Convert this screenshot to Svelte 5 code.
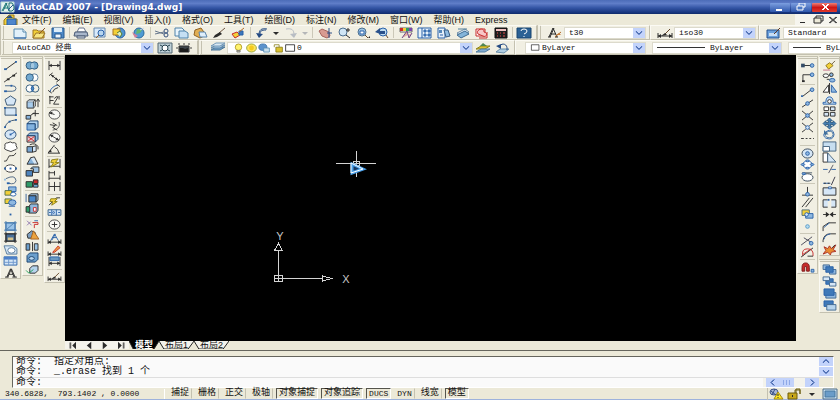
<!--
  Ventana principal de AutoCAD 2007: menús, barras de herramientas, área de
  dibujo, línea de comandos y barra de estado.
-->
<script lang="ts">
	type Shape = [d: string, fill?: string, stroke?: string];

	const K = '#2b2b2b';
	const B = '#2860a8';
	const L = '#8fb8e0';
	const P = '#d5e6f6';
	const Y = '#f2d038';
	const R = '#c82a2a';
	const G = '#2f9b68';
	const N = 'none';

	const o = (x: number, y: number, rx: number, ry = rx) =>
		`M${x - rx} ${y}a${rx} ${ry} 0 1 0 ${2 * rx} 0a${rx} ${ry} 0 1 0 ${-2 * rx} 0z`;
	const r = (x: number, y: number, w: number, h: number) => `M${x} ${y}h${w}v${h}h${-w}z`;

	// Cada icono se dibuja en una rejilla de 16x12: [trazado, relleno, línea]
	const icons: Record<string, Shape[]> = {
		app: [[r(1, 1, 13, 10), '#e7f4f0', '#b9d8d4'], ['M2 10l4-8 3 8M4 7h4', N, '#167a78'], ['M3 10l4-8M9 2h3l2 3v3l-2 2h-3z', N, '#1d6f74'], ['M8 9l5-5', N, '#24548a']],
		doc: [['M2 6l5-5h5v4h3v6h-13z', Y, '#9c7b16'], [r(5, 5, 9, 6), '#4d86cc', B], ['M4 4l4-3 3 3z', '#274f86']],
		new: [['M2 2h9l3 3v6h-12z', '#e2f1fa', '#5589ad'], ['M11 2v3h3', '#fff', '#5589ad'], ['M2 11h12', N, B]],
		open: [['M2 3h4l1 1h6v7h-11z', Y, '#9c7422'], ['M2 11l3-5h9l-3 5z', '#f7e682', '#9c7422'], ['M8 7l6-6', N, '#8b5a28']],
		save: [['M2 1h12v10h-12z', '#4e89c7', '#27598e'], [r(4, 1, 8, 4), '#dcecf8'], [r(5, 7, 6, 4), '#eef5fb', '#27598e']],
		print: [['M4 5l2-4h5l2 4z', '#fff', '#68748c'], ['M2 5h12l1 4h-14z', '#a9b7cb', '#4b5b75'], ['M4 9h8v2h-8z', '#dfe6ef', '#4b5b75']],
		preview: [['M2 1h11v9h-11z', '#d9eafa', '#6286ac'], [o(9, 6, 3), '#b8d6ef', B], ['M7 8l-3 3', N, '#976428']],
		publish: [[o(9, 6, 5), '#4f95cf', B], ['M2 2h7v6h-7z', Y, '#aa7520'], ['M6 6l3-2 2 3-2 3', '#dcecc0', '#557d2d']],
		globe: [[o(9, 6, 5), '#4f9bd3', '#2c6b9d'], ['M7 2l5 1-2 3-4 1z', '#64b46f'], ['M2 5l6 4-3 2z', '#cf7f9b'], ['M10 3l4-2', N, '#cfd8e8']],
		cut: [['M1 4l9 3M1 7l9-2', N, '#66768c'], [o(12, 4, 2), N, '#34507d'], [o(12, 8, 2), N, '#34507d']],
		copyclip: [['M2 1h7l2 2v6h-9z', '#e8f4fc', '#4f82a9'], ['M6 4h6l3 2v5h-9z', '#c5dff3', '#4f82a9']],
		paste: [['M3 3l6-2 5 7-6 3-6-3z', '#e0ae55', '#916425'], ['M7 5h6l2 5h-7z', '#dfeefa', '#5a85ad']],
		brush: [['M14 1l-6 5', N, '#6d5642'], ['M9 5l2 2-5 3-4 1 2-3z', K]],
		blockedit: [['M2 7l5-2 3 3-5 3z', Y, R], [r(9, 4, 4, 4), '#3b76bc', B], ['M9 5l5-4', N, '#b26c28']],
		undo: [['M13 2c-6-1-8 1-8 6', N, '#244a83'], ['M12 3c-5 0-6 1-6 5', N, '#244a83'], ['M2 6l7 1-4 4z', '#244a83']],
		redo: [['M3 2c6-1 8 1 8 6', N, '#b8bdc4'], ['M14 6l-7 1 4 4z', '#b8bdc4']],
		down: [['M5 5h6l-3 3z', K]],
		downgray: [['M5 5h6l-3 3z', '#b4b6b8']],
		pan: [['M2 4l3-2 7 3 1 4-3 2-5-2z', '#d89b91', '#a7655e'], ['M12 1v10M10 6h5', N, '#2e5186']],
		zoomrt: [[o(7, 5, 4), '#cfe5f5', '#4c6f90'], ['M10 8l4 3M12 1v4M10 3h4', N, K]],
		zoomwin: [[o(7, 5, 4), '#9ec5e5', '#4c6f90'], ['M5 4h4v3h-4z', '#fff', B], ['M10 8l3 3', N, '#684a2d'], ['M13 11l2-2v2z', K]],
		zoomprev: [[o(9, 5, 4), '#bddbf0', B], ['M1 5l5-4v3h5v3h-5z', '#28508b'], ['M12 8l2 3', N, '#684a2d']],
		props: [['M2 1h12v4h-12z', '#fff', '#666'], ['M2 1h3v3h-3z', R], ['M5 1h3v3h-3z', Y], ['M8 1h3v3h-3z', G], ['M11 1h3v3h-3z', '#7b45ae'], ['M4 11l5-7 2 7 3-5', '#e4aba0', '#704b8b']],
		dc: [[r(1, 1, 13, 10), '#e8f2fb', B], ['M5 1v10M7 3h2v2h-2zM11 3h2v2h-2zM7 7h2v2h-2zM11 7h2v2h-2z', '#72a2d4', B]],
		palettes: [[r(2, 1, 7, 10), '#e6f0f9', B], [r(3, 3, 3, 3), '#5689bb'], ['M8 3h4l2 6-4 1z', '#90bce1', '#375d85'], ['M4 8h3', N, B]],
		sheets: [['M2 6l8-4 4 3-8 4z', '#e1edf6', '#6e8da7'], ['M2 8l8-4 4 3-8 4z', '#84b4d9', '#416c92'], ['M3 2h9', N, '#55819f']],
		markup: [['M2 2h9v7h-9z', '#fff', R], ['M4 7c-3-5 7-7 6-2 5 1 2 6-1 4z', '#f8c6c6', R], ['M13 5v6h-8', N, R]],
		calc: [[r(2, 1, 12, 10), '#202020', '#111'], [r(3, 2, 10, 2), '#f0c2c2'], ['M4 6h1M7 6h1M10 6h2M4 9h1M7 9h1M10 9h2', N, '#e84b4b']],
		help: [[r(1, 1, 14, 10), '#2b6195', '#18456f'], ['M5 4q0-2 3-2t3 2q0 2-3 3M8 9v1', N, '#fff']],
		textstyle: [['M2 10l4-9 4 9M4 7h5', N, K], ['M3 10l4-9M1 10h3M8 10h3', N, K], ['M8 10l6-5', N, '#b26b29'], ['M9 8l3-2 2 2z', '#c67a35']],
		dimstyle: [['M1 6v5M15 6v5M1 9h14', N, K], ['M1 9l3-2v4zM15 9l-3-2v4z', K], ['M7 8l6-6', N, '#654529'], ['M4 9l4-3 2 2z', K]],
		tablestyle: [[r(1, 3, 12, 8), '#6ba1dd', '#24518b'], [r(3, 6, 8, 3), '#c7def5'], ['M8 7l6-6', N, '#5c3823']],
		gear: [[r(1, 1, 14, 10), '#bed0d8', '#536672'], [o(8, 6, 3, 3), '#fff', '#24404d'], ['M3 3l2 1M13 3l-2 1M3 9l2-1M13 9l-2-1', N, '#24404d']],
		workspace: [['M3 4h10v6h-10z', '#3c444b', '#333'], ['M2 2h2M12 2h2M7 2h2M1 5v2M15 5v2', N, '#444'], ['M4 6h3l2 1 3-1v4h-8z', '#1c1c1c']],
		layers: [['M1 8l5-3h9l-5 3z', '#6f9fc6', '#4e7799'], ['M1 6l5-3h9l-5 3z', '#a8c9e3', '#5e86a8'], ['M1 4l5-3h9l-5 3z', '#dceaf4', '#7399b8']],
		bulb: [[o(8, 5, 4), '#fff36c', '#a7931c'], ['M6 9h4v2h-4z', '#b9b79b', '#777']],
		sun: [[o(8, 6, 6, 5), '#ffe45c', '#8b9c2e'], [o(8, 6, 3, 3), '#f4cb20']],
		vpfreeze: [[o(6, 5, 5, 4), '#5b92cd', '#3e73a8'], [r(7, 6, 7, 5), '#c9e0ef', '#568bb0']],
		lock: [['M4 5v-3h6v3', N, '#8b811e'], [r(6, 5, 8, 6), '#dbc12e', '#84791a']],
		swatch: [[r(2, 2, 11, 8), '#fff', '#222']],
		layercur: [['M1 7l5-3h9l-5 3z', '#dbc12e', '#8b811e'], ['M1 10l5-3h9l-5 3z', '#80abd0', '#537fa3'], ['M8 1l4 3h-7z', '#4e8650']],
		layerprev: [['M2 10l4-3h9l-5 4z', '#afcde2', '#678daa'], ['M13 8c1-7-6-7-7-4', N, '#244a83'], ['M2 4l5-2v5z', '#244a83']],

		line: [['M3 10L14 2', N, K], [r(1, 9, 3, 2), B], [r(13, 1, 2, 2), B]],
		xline: [['M1 11L15 1', N, K], [r(4, 7, 3, 2), K], [r(10, 3, 3, 2), K]],
		pline: [['M2 3h8q4 0 4 3t-4 3h-7', N, '#416186'], [r(1, 8, 3, 2), B], [r(8, 2, 2, 2), B]],
		polygon: [['M8 1l6 4-2 6h-8l-2-6z', P, '#34516f']],
		rect: [[r(2, 2, 12, 8), P, '#34516f'], [r(1, 1, 2, 2), B], [r(13, 9, 2, 2), B]],
		arc: [['M2 11q1-8 12-9', N, '#34516f'], [r(1, 9, 2, 2), B], [r(6, 3, 2, 2), B], [r(13, 1, 2, 2), B]],
		circle: [[o(8, 6, 6, 5), P, '#294b73'], ['M8 6l5-3', N, B], [r(7, 5, 2, 2), B]],
		cloud: [['M4 10q-4-1-2-4-1-4 3-4 3-2 5 0 5-1 4 3 3 4-2 5-3 3-8 0z', '#fff', '#333']],
		spline: [['M1 10q3 1 4-3t4-3 5-3', N, '#333']],
		ellipse: [[o(8, 6, 6, 4), '#fff', '#333'], [r(1, 5, 2, 2), B], [r(13, 5, 2, 2), B], [r(7, 5, 2, 2), B]],
		ellarc: [['M3 4q10-5 11 2-1 5-8 3', N, '#4b6480'], [r(4, 8, 3, 2), B], [r(1, 4, 2, 2), L]],
		insert: [[r(6, 1, 8, 5), L, B], [r(2, 5, 7, 5), Y, '#526d4a'], [o(11, 9, 3, 2), '#fff', B]],
		block: [[r(2, 1, 7, 5), Y, '#526d4a'], [o(10, 5, 4, 3), L, B], ['M6 9h7', N, B]],
		point: [[r(7, 5, 2, 2), B]],
		hatch: [[r(3, 2, 10, 8), '#9bc3e8', B], ['M1 2h14M1 10h14M3 0v12M13 0v12M4 9l8-7', N, '#4b7eae']],
		gradient: [[r(3, 2, 10, 8), '#4a6f98', K], ['M1 2h14M1 10h14M3 0v12M13 0v12', N, K], [r(5, 6, 6, 3), '#d7c28b']],
		region: [['M1 2h10l4 3v6h-11z', P, '#52779a'], [o(9, 7, 4, 3), '#fff', '#52779a']],
		table: [[r(1, 2, 14, 9), P, B], [r(1, 2, 14, 3), '#4b7fc9'], ['M1 8h14M6 4v7M11 4v7', N, '#6d97cd']],
		mtext: [['M2 11h4M10 11h5', N, K], ['M4 11l4-9 4 9M6 8h5', N, K], ['M5 11l4-9 4 9', N, K]],

		union: [[o(5, 6, 4), '#72a9d0', '#315a7b'], [o(10, 6, 4), '#72a9d0', '#315a7b'], [o(8, 6, 2, 3), '#a3c7e0']],
		subtract: [[o(10, 6, 4), '#fff', '#5b7d99'], [o(5, 6, 4), '#72a9d0', '#315a7b']],
		intersect: [[o(5, 6, 4), '#fff', '#315a7b'], [o(11, 6, 4), N, '#315a7b'], ['M8 3q3 3 0 6-3-3 0-6z', '#4d8bc0', B]],
		extrude: [[r(2, 4, 7, 7), '#a8ccec', K], ['M2 4l2-2h7l-2 2M9 11l2-2v-7', P, K], ['M14 10v-8M12 4l2-3 2 3', N, K]],
		moveface: [[r(1, 7, 5, 4), '#87b3dc', K], ['M8 5h7M11 1v7M6 7l4-3', N, K]],
		offsetface: [[r(2, 4, 9, 7), '#83b3df', B], ['M2 4l3-3h9v7l-3 3v-7z', '#b4d4ef', '#17406b']],
		deleteface: [[r(2, 4, 9, 7), '#e8c6cf', K], ['M2 4l3-3h9v7l-3 3v-7z', '#94bbde', '#17406b'], ['M3 5l7 5M10 5l-7 5', N, R]],
		rotateface: [['M2 4h6v6h-6z', '#78a6d3', K], ['M8 4l4-1v6l-4 1z', P, K], ['M5 2q6-3 9 2v3', N, K]],
		taperface: [['M2 10l4-7 4 2v5z', '#86b3dc', K], ['M6 3l4-1 4 8h-4', P, K]],
		copyface: [[r(1, 5, 7, 6), '#4e84bd', K], ['M6 3l2-2h7v6h-6v-4z', '#9bc2e5', K]],
		colorface: [[r(1, 4, 7, 6), G, K], [r(9, 2, 5, 4), R, K], [r(9, 7, 5, 3), '#68a8d6', K]],
		copyedge: [[r(4, 4, 8, 7), '#4a87c8', K], ['M4 4l2-2h8v7l-2 2v-7z', '#a9cdec', K], ['M1 2v9', N, '#39649a']],
		coloredge: [['M4 4l2-3h8v7l-2 3h-8z', '#8eb9de', K], [r(1, 4, 4, 6), G, K], [r(9, 5, 3, 4), '#fff', R]],
		imprint: [['M2 3l5 5M2 8l4-4', N, '#8e76af'], ['M8 5h6v2h-4v4', N, R], ['M10 3h4', N, B]],
		clean: [['M2 6l5-4 4 2v6h-8z', '#7d9fc0', K], ['M9 2l6 9h-9z', '#eba23e', '#a26122']],
		separate: [[r(1, 3, 4, 7), '#6b9fcd', K], ['M8 1v10', N, K], [r(10, 3, 4, 7), '#9bc4e8', K]],
		shell: [['M2 4l3-3h9v7l-3 3h-9z', '#6b9fcd', '#17406b'], [o(7, 7, 3, 2), '#b8d6ef', '#17406b']],
		check: [['M5 5l3-3h6v5l-3 3h-6z', '#b7d4ed', K], ['M1 7l3 3 5-4', N, '#209c55']],

		dimlinear: [['M2 1v10M14 1v10M2 6h12', N, K], ['M2 6l3-2v4zM14 6l-3-2v4z', K]],
		dimaligned: [['M2 4l4-3M10 11l4-3M4 3l8 6', N, K], ['M4 3l4 1-2 2zM12 9l-4-1 2-2z', K]],
		dimarc: [['M3 10q1-6 9-8', N, B], ['M1 8l4 3M10 1l4 3M6 10q1-4 6-5', N, K]],
		dimord: [['M3 1v9M3 6h4M8 4q1-3 4-2l-5 8h6M2 2h5M13 1v4', N, K]],
		dimradius: [[o(8, 6, 6, 5), '#f8f8f4', '#444'], ['M8 6l-6-2', N, K], ['M2 4l4-1-1 3z', K]],
		dimjog: [['M13 1q2 8-7 9', N, '#555'], ['M3 4l6 1-3 2 5 3M6 2l5 3', N, K]],
		dimdia: [[o(8, 6, 6, 5), '#f8f8f4', '#444'], ['M3 3l10 6', N, K], ['M3 3l4 0-2 3zM13 9l-4 0 2-3z', K]],
		dimang: [['M1 10l7-9M1 10h13M8 3q4 2 5 7', N, K], ['M1 9l3-3 1 3z', K]],
		qdim: [['M2 1v10M14 1v10M2 9h12', N, K], ['M5 2l7-1-3 4h4l-9 5 3-5h-3z', Y, '#8b7e15']],
		dimbase: [['M2 1v10M8 1v5M14 6v5M2 3h6M2 9h12', N, K]],
		dimcont: [['M2 1v10M8 1v10M14 1v10M2 6h12', N, K]],
		leader: [['M2 10l8-8h4', N, K], ['M4 3h7l-3 3h3l-6 4 1-4h-3z', Y, '#8b7e15']],
		tolerance: [[r(1, 3, 14, 6), P, '#315b86'], ['M5 3v6M10 3v6M2 6h2M12 6h2', N, B], [o(7, 6, 1), N, B]],
		center: [[o(8, 6, 6, 5), '#fbfbf7', '#444'], ['M5 6h6M8 3v6', N, K]],
		dimedit: [['M4 8l4-7 4 7M6 5h4', N, B], ['M5 8l4-7', N, B], ['M1 7v5M15 7v5M1 10h14', N, K], ['M1 10l3-2v4zM15 10l-3-2v4z', K]],
		dimtedit: [['M1 7v5M15 7v5M1 10h14', N, K], ['M1 10l3-2v4zM15 10l-3-2v4z', K], ['M6 8l6-7 2 2-6 5z', '#eba23e', R]],
		dimupdate: [['M2 1v10M14 1v10M2 8h12', N, K], ['M2 8l3-2v4zM14 8l-3-2v4z', K], [r(3, 1, 10, 4), '#6b99bf', B]],

		tmptrack: [['M3 6h10', N, K], [r(1, 4, 4, 4), '#334b66'], [o(13, 6, 2), L, B]],
		from: [['M3 10v-7h9', N, K], [r(2, 9, 3, 2), K], [o(13, 3, 2), L, B]],
		endpoint: [['M3 10l9-7', N, K], [o(13, 3, 2), L, B], [r(1, 9, 2, 2), B]],
		midpoint: [['M2 10l12-8', N, K], [o(8, 6, 2), L, B]],
		inters: [['M2 1l12 10M14 1L2 11', N, K], [o(8, 6, 2), L, B]],
		appint: [['M2 1l12 10M14 1l-4 3M6 8l-4 3', N, K], [o(8, 6, 2), P, B]],
		ext: [['M1 6h3M6 6h2M10 6h2M14 6h1', N, K]],
		ocenter: [[o(8, 6, 6, 5), P, '#345'], [o(8, 6, 2), L, B]],
		quadrant: [[o(8, 6, 5, 4), '#fff', B], [o(8, 2, 2, 1), L, B], [o(8, 10, 2, 1), L, B], [o(3, 6, 2, 1), L, B], [o(13, 6, 2, 1), L, B]],
		tangent: [[o(8, 7, 6, 4), '#fff', '#345'], ['M2 2h11', N, '#456'], [o(4, 3, 2, 1), L, B]],
		perp: [['M8 1v9M2 10h12', N, K], [o(8, 9, 2), L, B]],
		parallel: [['M2 11l8-10M6 11l8-10', N, K]],
		oinsert: [[r(2, 1, 8, 6), Y, '#4d6b7c'], [r(6, 5, 8, 5), L, B], [o(7, 6, 2), P, B]],
		node: [[o(8, 6, 2), '#b4dbf0', '#5a9bc8']],
		nearest: [['M1 11l12-9M4 3l8 5', N, '#445'], [o(12, 9, 2), L, B]],
		nosnap: [['M3 10q-2-8 5-8t6 8', N, R], ['M1 11L14 1M8 10h6', N, K], ['M3 8l9-6', N, R]],
		magnet: [['M2 10v-4q0-5 4-5t4 5v4h-3v-5h-2v5z', R, '#7b1b1b'], [r(12, 8, 3, 3), L, B]],

		erase: [['M8 7l6-6', N, '#6b5a3a'], ['M4 6l4-3 4 3-5 4z', Y, '#8d7322'], ['M1 11h8', N, '#c76b87']],
		copy: [[o(4, 4, 3, 2), '#fff', K], [o(10, 3, 2), L, K], [o(11, 9, 3, 2), L, B], ['M5 8h3', N, K]],
		mirror: [['M7 2v8h-6z', '#fff', K], ['M10 2v8h6z', L, B], ['M8 0v12', N, K]],
		offset: [['M1 10h14v-2h-3q0-6-4-6t-4 6h-3z', '#c2dcf4', B], [o(8, 7, 2), '#fff', K]],
		array: [[r(2, 1, 5, 4), '#fff', K], [r(9, 1, 5, 4), P, K], [r(2, 7, 5, 4), P, K], [r(9, 7, 5, 4), P, K]],
		move: [['M8 0l3 3h-2v2h3v-2l3 3-3 3v-2h-3v2h2l-3 3-3-3h2v-2h-3v2l-3-3 3-3v2h3v-2h-2z', '#4681b7', '#28577f']],
		rotate: [['M4 3q8-5 9 3-1 7-9 4-4-3-1-6', N, B], ['M4 4q7-4 8 2-1 5-7 3-3-2-1-4', N, '#3f6f9d'], ['M2 1v5h5z', '#3f6f9d']],
		scale: [[r(1, 1, 14, 10), '#c7def0', '#44637e'], [r(1, 6, 7, 5), '#fff', '#44637e']],
		stretch: [['M1 1h5v10h-5z', '#fff', K], ['M6 1l9 10h-9z', P, '#44637e']],
		trim: [['M1 7h5M10 7h5', N, B], ['M7 11l5-9', N, '#556']],
		extend: [['M1 9h8', N, B], ['M10 11l4-9', N, '#334'], ['M2 9h2M6 9h2', N, K]],
		breakpt: [[r(1, 2, 14, 8), P, K], [r(7, 1, 3, 2), '#fff', B]],
		break: [['M6 2h-5v8h5M10 2h5v8h-5', P, K], [r(6, 1, 2, 2), B]],
		join: [['M1 6h5M10 6h5', N, K], ['M4 3l4 3-4 3zM12 3l-4 3 4 3z', K]],
		chamfer: [['M1 11v-5l6-4h8', N, K], ['M2 7l6-5', N, B]],
		fillet: [['M1 11v-2q1-7 8-7h6', N, K], ['M2 8q1-5 7-6', N, B]],
		explode: [['M2 3l4 2 2-3 2 3 5-4-3 5 3 2-5 1-1 3-3-3-5 2 3-4z', '#e88b30', '#a92d25'], ['M11 4l3-3', N, K]],
		front: [[r(1, 1, 7, 5), L, '#42688f'], [r(8, 6, 7, 5), L, '#42688f'], [r(4, 3, 8, 6), '#3f79b8', B]],
		back: [[r(4, 3, 8, 6), '#3f79b8', B], [r(1, 1, 7, 4), P, '#42688f'], [r(8, 7, 7, 4), P, '#42688f']],
		above: [[r(4, 5, 11, 6), L, '#42688f'], [r(2, 1, 11, 7), '#3f79b8', B]],
		under: [[r(2, 1, 10, 6), '#3f79b8', B], [r(5, 5, 10, 6), '#b6d3ec', '#42688f']],

		chevron: [['M4 4l4 4 4-4M4 5l4 4 4-4', N, '#2c519e']],
		up: [['M4 8l4-4 4 4M4 7l4-4 4 4', N, '#2c519e']],
		left: [['M10 2l-4 4 4 4M9 2l-4 4 4 4', N, '#2c519e']],
		right: [['M6 2l4 4-4 4M7 2l4 4-4 4', N, '#2c519e']],
		minimize: [['M4 8h6v2h-6z', '#fff']],
		restore: [[r(6, 2, 6, 4), N, '#fff'], [r(4, 5, 6, 4), '#4b77c4', '#fff']],
		close: [['M5 3l6 6M11 3l-6 6M6 3l6 6M12 3l-6 6', N, '#fff']],
		minimizedoc: [['M5 8h5v1h-5z', K]],
		restoredoc: [[r(6, 2, 7, 5), N, K], [r(4, 4, 7, 5), '#ece9d8', K]],
		closedoc: [['M4 3l7 6M11 3l-7 6M5 3l7 6M12 3l-7 6', N, '#444']],
		first: [['M4 2v8M5 2v8', N, K], ['M12 1v10l-5-5z', K]],
		prev: [['M11 1v10l-6-5z', K]],
		next: [['M5 1v10l6-5z', K]],
		last: [['M4 1v10l5-5z', K], ['M11 2v8M12 2v8', N, K]],
		comm: [[o(6, 4, 4, 3), '#a9b6d4', '#3e5285'], ['M3 3l6 5M7 1l-3 6', N, '#334b83'], ['M10 4l5 7h-9z', '#ffe51e', '#a68b11'], ['M10 6v2M10 9v1', N, K]],
		padlock: [['M9 5v-3h5v4', N, '#6e6110'], ['M10 5v-4h4v5', N, '#6e6110'], [r(2, 5, 9, 6), '#c7a71b', '#6e5d0d'], [r(6, 7, 1, 2), K]],
		screen: [[r(1, 1, 14, 10), '#c9dff0', '#51708c'], [r(3, 3, 10, 6), '#6a9cc9', '#49799f']]
	};

	const menus = ['文件(F)', '编辑(E)', '视图(V)', '插入(I)', '格式(O)', '工具(T)', '绘图(D)', '标注(N)', '修改(M)', '窗口(W)', '帮助(H)', 'Express'];

	// '|' marca un separador
	const standard = 'new open save | print preview publish globe | cut copyclip paste brush blockedit | undo down redo downgray | pan zoomrt zoomwin zoomprev | props dc palettes sheets markup calc | help'.split(' ');
	const draw = 'line xline pline polygon rect arc circle cloud spline ellipse ellarc insert block point hatch gradient region table mtext'.split(' ');
	const solids = 'union subtract intersect | extrude moveface offsetface deleteface rotateface taperface copyface colorface | copyedge coloredge | imprint clean separate shell check'.split(' ');
	const dims = 'dimlinear dimaligned dimarc dimord | dimradius dimjog dimdia dimang | qdim dimbase dimcont | leader tolerance center | dimedit dimtedit dimupdate | dimstyle'.split(' ');
	const snaps = 'tmptrack from | endpoint midpoint inters appint ext | ocenter quadrant tangent | perp parallel oinsert node | nearest nosnap | magnet'.split(' ');
	const modify = 'erase copy mirror offset array move rotate scale stretch trim extend breakpt break join chamfer fillet explode'.split(' ');
	const order = 'front back above under'.split(' ');

	let modes = $state([
		{ label: '捕捉', on: false },
		{ label: '栅格', on: false },
		{ label: '正交', on: false },
		{ label: '极轴', on: false },
		{ label: '对象捕捉', on: true },
		{ label: '对象追踪', on: true },
		{ label: 'DUCS', on: true, latin: true },
		{ label: 'DYN', on: false, latin: true },
		{ label: '线宽', on: false },
		{ label: '模型', on: true }
	]);

	const tabs = ['模型', '布局1', '布局2'];
	let tab = $state('模型');
	let command = $state('');
</script>

{#snippet icon(name: string)}
	<svg class="icon" viewBox="0 0 16 12" aria-hidden="true">
		{#each icons[name] as [d, fill, stroke]}
			<path {d} fill={fill ?? 'none'} stroke={stroke ?? 'none'} />
		{/each}
	</svg>
{/snippet}

{#snippet tool(name: string)}
	{#if name === '|'}
		<span class="sep"></span>
	{:else}
		<button type="button" class="tool {name}" aria-label={name}>{@render icon(name)}</button>
	{/if}
{/snippet}

{#snippet combo(label: string, value: string, kind: string)}
	<span class="combo {kind}">
		{#if kind === 'layer'}
			{#each ['bulb', 'sun', 'vpfreeze', 'lock', 'swatch'] as name}{@render icon(name)}{/each}
		{:else if kind === 'color'}
			{@render icon('swatch')}
		{:else if kind.startsWith('stroke')}
			<span class="rule"></span>
		{/if}
		<select aria-label={label}><option>{value}</option></select>
		<span class="arrow">{@render icon('chevron')}</span>
	</span>
{/snippet}

{#snippet palette(names: string[], kind: string)}
	<div class="palette {kind}" role="toolbar">
		{#each names as name}{@render tool(name)}{/each}
	</div>
{/snippet}

<div class="window">
	<header class="title">
		{@render icon('app')}
		<h1>AutoCAD 2007 - [Drawing4.dwg]</h1>
		<div class="controls">
			{#each ['minimize', 'restore', 'close'] as name}
				<button type="button" class={name} aria-label={name}>{@render icon(name)}</button>
			{/each}
		</div>
	</header>

	<nav class="menu">
		{@render icon('doc')}
		{#each menus as item}<button type="button">{item}</button>{/each}
		<div class="doc-controls">
			{#each ['minimizedoc', 'restoredoc', 'closedoc'] as name}
				<button type="button" aria-label={name}>{@render icon(name)}</button>
			{/each}
		</div>
	</nav>

	<div class="bar">
		<div class="group std">{#each standard as name}{@render tool(name)}{/each}</div>
		<div class="group style">{@render tool('textstyle')}{@render combo('textstyle', 't30', 'short')}</div>
		<div class="group">{@render tool('dimstyle')}{@render combo('dimstyle', 'iso30', 'short')}</div>
		<div class="group grow">{@render tool('tablestyle')}{@render combo('tablestyle', 'Standard', 'short')}</div>
	</div>

	<div class="bar">
		<div class="group spaces">
			{@render combo('workspace', 'AutoCAD 经典', 'space')}
			{@render tool('gear')}{@render tool('workspace')}
		</div>
		<div class="group layers-group">
			{@render tool('layers')}
			{@render combo('layer', '0', 'layer')}
			{@render tool('layercur')}{@render tool('layerprev')}
		</div>
		<div class="group grow">
			{@render combo('color', 'ByLayer', 'color')}
			{@render combo('linetype', 'ByLayer', 'stroke')}
			{@render combo('lineweight', 'ByLayer', 'stroke thin')}
		</div>
	</div>

	<main class="work">
		<div class="dock">
			{@render palette(draw, 'draw')}
			{@render palette(solids, 'solids')}
			{@render palette(dims, 'dims')}
		</div>

		<div class="view">
			<svg class="canvas" aria-label="Drawing4">
				<!-- icono SCP -->
				<g class="wire">
					<path d="M213.500 223.500V196M213.500 223.500H257M209.500 220.500h8v6h-8zM209.500 223.500h8M213.500 220.500v6" />
					<path d="M209.500 195.500l4-7 4 7zM257.500 221v5l9-2.500z" />
				</g>
				<text x="215" y="185">Y</text>
				<text x="281" y="228">X</text>
				<!-- cursor en cruz -->
				<path class="wire" d="M271 108.500h40M291.500 96v26M288.500 106.500h6v4h-6z" />
				<path class="pointer" d="M287 109v9l11-4z" />
				<path class="pointer-edge" d="M286 108v10l12-4z" />
			</svg>
			<div class="tabs">
				{#each ['first', 'prev', 'next', 'last'] as name}
					<button type="button" class="step" aria-label={name}>{@render icon(name)}</button>
				{/each}
				{#each tabs as name}
					<button type="button" class="tab" class:active={tab === name} onclick={() => (tab = name)}>
						<svg viewBox="0 0 36 8" preserveAspectRatio="none" aria-hidden="true">
							<path d="M0 0l5 8h25l6-8" />
						</svg>
						<span>{name}</span>
					</button>
				{/each}
			</div>
		</div>

		<div class="dock right">
			{@render palette(snaps, 'snaps')}
			<div class="stack">
				{@render palette(modify, 'modify')}
				{@render palette(order, 'order')}
			</div>
		</div>
	</main>

	<section class="command">
		<div class="pane">
			<div class="history">
				<div class="lines">
					<p><span class="prompt">命令:</span><span>指定对角点:</span></p>
					<p><span class="prompt">命令:</span><span>_.erase 找到 1 个</span></p>
				</div>
				<div class="vscroll">
					<button type="button" aria-label="up">{@render icon('up')}</button>
					<button type="button" aria-label="down">{@render icon('chevron')}</button>
				</div>
			</div>
			<div class="entry">
				<label class="prompt" for="command">命令:</label>
				<input id="command" type="text" bind:value={command} autocomplete="off" />
				<div class="hscroll">
					<button type="button" aria-label="left">{@render icon('left')}</button>
					<span class="thumb"></span>
					<button type="button" aria-label="right">{@render icon('right')}</button>
				</div>
			</div>
		</div>
	</section>

	<footer class="status">
		<output class="coords">340.6828,&nbsp; 793.1402 , 0.0000</output>
		{#each modes as mode}
			<button
				type="button"
				class="mode"
				class:on={mode.on}
				class:latin={mode.latin}
				aria-pressed={mode.on}
				onclick={() => (mode.on = !mode.on)}
			>
				{mode.label}
			</button>
		{/each}
		<div class="tray">
			{#each ['comm', 'padlock', 'down', 'screen'] as name}
				<button type="button" aria-label={name}>{@render icon(name)}</button>
			{/each}
		</div>
	</footer>
</div>

<style>
	:global(body) {
		margin: 0;
		background: #ece9d8;
	}
	.window {
		--face: #ece9d8;
		--panel: #f1efe3;
		--edge: #c4c1b0;
		--mono: 'Liberation Mono', 'Noto Sans CJK SC', monospace;
		--sans: 'Liberation Sans', 'Noto Sans CJK SC', sans-serif;
		display: flex;
		flex-direction: column;
		height: 100vh;
		overflow: hidden;
		background: var(--face);
		color: #111;
		font: 9px/12px var(--sans);
	}
	button {
		display: flex;
		align-items: center;
		justify-content: center;
		flex-shrink: 0;
		margin: 0;
		padding: 0;
		border: 0;
		background: none;
		color: inherit;
		font: inherit;
	}
	.icon {
		display: block;
		flex-shrink: 0;
		width: 16px;
		height: 12px;
	}

	/* título */
	.title {
		display: flex;
		align-items: center;
		gap: 2px;
		flex-shrink: 0;
		height: 14px;
		padding-right: 3px;
		background: linear-gradient(#4c6cb8 0%, #5f7dc8 25%, #3556a6 55%, #16347c 90%, #0f2a68);
	}
	.title h1 {
		margin: 0;
		color: #fff;
		font: bold 9px/12px 'DejaVu Sans', sans-serif;
	}
	.controls {
		display: flex;
		gap: 1px;
		margin-left: auto;
	}
	.controls button {
		width: 20px;
		height: 9px;
		overflow: hidden;
		border-radius: 1px;
		background: linear-gradient(#7c9fe0, #2f57ab);
	}
	.controls .close {
		width: 25px;
		background: linear-gradient(#f08076, #cc1616 50%, #e03a2c);
	}

	/* menú */
	.menu {
		display: flex;
		align-items: center;
		gap: 11px;
		flex-shrink: 0;
		height: 11px;
		padding-left: 2px;
	}
	.menu > .icon {
		margin-right: -7px;
	}
	.doc-controls {
		display: flex;
		margin-left: auto;
		background: #f6f5ee;
	}
	.doc-controls button {
		width: 15px;
		height: 11px;
	}

	/* barras horizontales */
	.bar {
		display: flex;
		flex-shrink: 0;
		height: 15px;
		overflow: hidden;
	}
	.group {
		display: flex;
		align-items: center;
		flex-shrink: 0;
		box-sizing: border-box;
		padding: 0 2px 0 4px;
		border: 1px solid;
		border-color: #fbfaf4 var(--edge) var(--edge) #fbfaf4;
		background: var(--panel);
	}
	.bar .tool {
		width: 19px;
		height: 12px;
	}
	.bar .down,
	.bar .downgray {
		width: 10px;
	}
	.bar .sep {
		width: 1px;
		height: 11px;
		margin: 0 2px;
		background: #cbc8b8;
	}
	.std {
		width: 537px;
		padding-left: 6px;
		border-left: 4px double var(--edge);
	}
	.style {
		width: 113px;
		padding-left: 4px;
		border-left: 4px double var(--edge);
	}
	.group.grow {
		flex: 1 0 auto;
	}
	.combo {
		display: flex;
		align-items: center;
		box-sizing: border-box;
		flex-shrink: 0;
		height: 12px;
		padding-left: 4px;
		border: 1px solid #dcdacc;
		background: #fff;
	}
	.combo select {
		flex: 1;
		min-width: 0;
		height: 10px;
		padding: 0;
		border: 0;
		appearance: none;
		background: none;
		color: #111;
		font: 8px/10px var(--mono);
	}
	.arrow {
		display: flex;
		align-items: center;
		justify-content: center;
		width: 12px;
		height: 10px;
		background: #c3d3fb;
		pointer-events: none;
	}
	.combo .arrow .icon {
		width: 12px;
		height: 9px;
	}
	.short {
		width: 82px;
	}
	.spaces {
		width: 198px;
		padding-left: 8px;
		border-left: 4px double var(--edge);
	}
	.space {
		width: 142px;
		margin-right: 1px;
	}
	.layers-group {
		width: 317px;
		padding-left: 6px;
		border-left: 4px double var(--edge);
	}
	.layer {
		width: 246px;
	}
	.layer .icon {
		width: 13px;
		height: 10px;
	}
	.group.grow .color {
		width: 121px;
		gap: 1px;
		margin-left: 5px;
	}
	.color .icon {
		width: 11px;
		height: 9px;
	}
	.stroke {
		width: 130px;
		gap: 5px;
		margin-left: 6px;
	}
	.rule {
		flex-shrink: 0;
		width: 48px;
		height: 1px;
		background: #333;
	}
	.thin .rule {
		width: 28px;
	}

	/* zona de trabajo */
	.work {
		display: flex;
		flex: 1;
		min-height: 0;
	}
	.dock {
		display: flex;
		align-items: flex-start;
		gap: 1px;
		padding-top: 1px;
	}
	.dock.right {
		padding-left: 1px;
	}
	.palette {
		display: flex;
		flex-direction: column;
		box-sizing: border-box;
		width: 21px;
		padding-top: 1px;
		border: 1px solid;
		border-top: 3px double var(--edge);
		border-color: var(--edge) var(--edge) var(--edge) #fbfaf4;
		background: var(--panel);
	}
	.palette .tool {
		flex: 1;
		min-height: 0;
	}
	.palette .icon {
		width: 15px;
		height: 11px;
	}
	.palette .sep {
		flex: 0 0 1px;
		margin: 1px 2px;
		background: #cbc8b8;
	}
	.draw {
		height: 223px;
	}
	.solids {
		height: 220px;
	}
	.dims {
		height: 227px;
	}
	.snaps {
		height: 218px;
	}
	.modify {
		height: 200px;
	}
	.order {
		height: 54px;
	}
	.stack {
		display: flex;
		flex-direction: column;
		gap: 3px;
	}
	.view {
		display: flex;
		flex: 1;
		flex-direction: column;
		min-width: 0;
	}
	.canvas {
		display: block;
		flex: 1;
		width: 100%;
		min-height: 0;
		background: #000;
		shape-rendering: crispEdges;
	}
	.wire {
		fill: none;
		stroke: #d4d4d4;
	}
	.canvas text {
		fill: #c8c8c8;
		font: 11px 'Liberation Sans', sans-serif;
		text-anchor: middle;
	}
	.pointer-edge {
		fill: none;
		stroke: #fff;
		shape-rendering: auto;
	}
	.pointer {
		fill: #17375e;
		stroke: #4aa0ea;
		stroke-width: 3;
		shape-rendering: auto;
	}

	/* pestañas */
	.tabs {
		display: flex;
		flex-shrink: 0;
		height: 8px;
	}
	.step {
		width: 16px;
		height: 8px;
		overflow: hidden;
		background: #f4f3ec;
	}
	.step .icon {
		width: 12px;
		height: 9px;
	}
	.tab {
		position: relative;
		height: 8px;
		padding: 0 6px;
		font-size: 9px;
		line-height: 8px;
	}
	.tab svg {
		position: absolute;
		inset: 0;
		width: 100%;
		height: 100%;
		fill: #f4f3ec;
		stroke: #222;
	}
	.tab span {
		position: relative;
	}
	.tab.active {
		color: #fff;
		font-weight: bold;
	}
	.tab.active svg {
		fill: #000;
	}

	/* línea de comandos */
	.command {
		flex-shrink: 0;
		margin-top: 1px;
		padding: 5px 6px 0 12px;
		border-top: 1px solid #66655d;
	}
	.pane {
		border: 1px solid;
		border-color: #66655d #fff #fff #66655d;
		background: #fafafa;
		font: 10px/10px var(--mono);
	}
	.history {
		display: flex;
		height: 20px;
		border-bottom: 1px solid #dedede;
	}
	.lines {
		flex: 1;
		padding-left: 3px;
		overflow: hidden;
	}
	.lines p {
		display: flex;
		height: 10px;
		margin: 0;
	}
	.prompt {
		flex-shrink: 0;
		width: 38px;
	}
	.vscroll {
		display: flex;
		flex-direction: column;
		gap: 1px;
	}
	.vscroll button,
	.hscroll button {
		width: 14px;
		height: 9px;
		overflow: hidden;
		background: #c3d3fb;
	}
	.command .icon {
		width: 12px;
		height: 9px;
	}
	.entry {
		display: flex;
		align-items: center;
		height: 9px;
		padding-left: 3px;
	}
	.entry input {
		flex: 1;
		min-width: 0;
		height: 9px;
		padding: 0;
		border: 0;
		outline: 0;
		background: none;
		font: inherit;
	}
	.hscroll {
		display: flex;
		box-sizing: border-box;
		width: 70px;
		padding-left: 3px;
		border-right: 14px solid var(--face);
		background: #f4f3ec;
	}
	.hscroll button:last-child {
		margin-left: auto;
	}
	.thumb {
		width: 8px;
		border: 3px solid #c3d3fb;
		border-width: 2px 3px;
		background: repeating-linear-gradient(90deg, #8ea9e8 0 1px, #c3d3fb 1px 3px);
	}

	/* barra de estado */
	.status {
		display: flex;
		align-items: center;
		gap: 3px;
		flex-shrink: 0;
		box-sizing: border-box;
		height: 12px;
		padding: 0 2px 0 3px;
		border-bottom: 1px solid #9db2dc;
	}
	.coords {
		box-sizing: border-box;
		width: 162px;
		height: 10px;
		padding-left: 2px;
		border-right: 1px solid #fff;
		font: 8px/10px var(--mono);
	}
	.mode {
		box-sizing: border-box;
		height: 11px;
		padding: 0 2px;
		border: 1px solid;
		border-color: transparent var(--edge) transparent transparent;
		font: 9px/9px var(--mono);
	}
	.mode.latin {
		font-size: 8px;
	}
	.mode.on {
		border-color: #55544c #fff #fff #55544c;
	}
	.tray {
		display: flex;
		gap: 2px;
		margin-left: auto;
		border-left: 1px solid var(--edge);
	}
</style>
